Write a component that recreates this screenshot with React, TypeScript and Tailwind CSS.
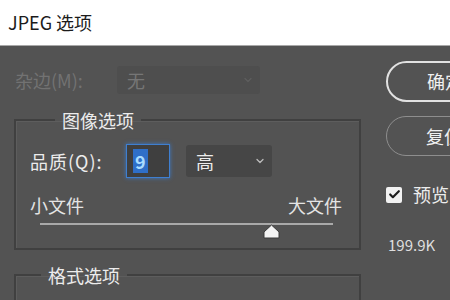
import { Check, ChevronDown } from "lucide-react";

const font = { fontFamily: '"Noto Sans CJK SC", "Noto Sans", sans-serif' };

function Select({ value, disabled, className }: { value: string; disabled?: boolean; className: string }) {
  return (
    <div
      className={`flex items-center justify-between rounded-[3px] pl-[10px] pr-[6px] ${className} ${
        disabled ? "bg-[#4e4e4e] text-[#767676]" : "bg-[#464646] text-[#ececec]"
      }`}
    >
      <span className="text-[18px] leading-none">{value}</span>
      <ChevronDown size={12} strokeWidth={2.5} className={disabled ? "text-[#5e5e5e]" : "text-[#bdbdbd]"} />
    </div>
  );
}

function Group({ title, className, children }: { title: string; className: string; children?: React.ReactNode }) {
  return (
    <fieldset className={`border-2 border-[#404040] shadow-[inset_1px_1px_0_#5d5d5d] ${className}`}>
      <legend className="ml-[25px] px-[7px] text-[18px] leading-[20px] text-[#ececec]">{title}</legend>
      {children}
    </fieldset>
  );
}

export default function App() {
  return (
    <div className="w-[450px] h-[300px] overflow-hidden bg-[#535353] flex flex-col" style={font}>
      <div className="h-[46px] shrink-0 bg-white flex items-center pl-[8px] text-[18px] text-[#1b1b1b] border-b border-[#a8a8a8]">
        JPEG 选项
      </div>

      <div className="flex flex-1">
        <div className="w-[372px] shrink-0 flex flex-col">
          <div className="flex items-center mt-[20px] h-[28px]">
            <span className="ml-[15px] w-[102px] text-[18px] text-[#727272]">杂边(M):</span>
            <Select value="无" disabled className="w-[143px] h-[28px]" />
          </div>

          <Group title="图像选项" className="ml-[14px] mt-[16px] w-[347px] h-[140px] px-[14px]">
            <div className="flex items-center mt-[14px]">
              <span className="w-[96px] text-[18px] tracking-[1px] text-[#ececec]">品质(Q):</span>
              <div className="w-[44px] h-[34px] bg-[#3f3f3f] border border-[#3f7fd0] shadow-[0_0_4px_#3a78c8] flex items-center pl-[6px]">
                <span className="bg-[#2f6fc8] text-[#a9dcff] text-[18px] leading-[24px] px-[2px] font-bold">9</span>
              </div>
              <Select value="高" className="ml-[16px] w-[86px] h-[32px]" />
            </div>
            <div className="flex justify-between mt-[15px] text-[18px] leading-[24px] text-[#e4e4e4]">
              <span>小文件</span>
              <span className="mr-[3px]">大文件</span>
            </div>
            <div className="relative ml-[10px] mr-[12px] mt-[6px] h-[16px]">
              <div className="h-[2px] bg-[#a9a9a9] mt-[4px]" />
              <svg className="absolute left-[223px] top-[1px]" width="17" height="15" viewBox="0 0 17 15">
                <path d="M8.5 1 L16 8 L16 14 L1 14 L1 8 Z" fill="#f4f4f4" stroke="#3a3a3a" strokeWidth="1" />
              </svg>
            </div>
          </Group>

          <Group title="格式选项" className="ml-[14px] mt-[15px] w-[347px] h-[60px]" />
        </div>

        <div className="flex flex-col flex-1 pl-[14px]">
          <button className="mt-[15px] w-[110px] h-[41px] shrink-0 rounded-full border-2 border-[#e2e2e2] text-left pl-[39px] text-[18px] text-[#f0f0f0]">
            确定
          </button>
          <button className="mt-[14px] w-[110px] h-[40px] shrink-0 rounded-full border-[1.5px] border-[#8e8e8e] text-left pl-[39px] text-[18px] text-[#f0f0f0]">
            复位
          </button>
          <div className="flex items-center mt-[25px]">
            <div className="w-[16px] h-[16px] rounded-[2px] bg-[#f2f2f2] flex items-center justify-center">
              <Check size={13} strokeWidth={4} className="text-[#1e1e1e]" />
            </div>
            <span className="ml-[11px] text-[18px] text-[#ececec]">预览</span>
          </div>
          <div className="mt-[26px] pl-[2px] text-[15px] text-[#dedede]">199.9K</div>
        </div>
      </div>
    </div>
  );
}
